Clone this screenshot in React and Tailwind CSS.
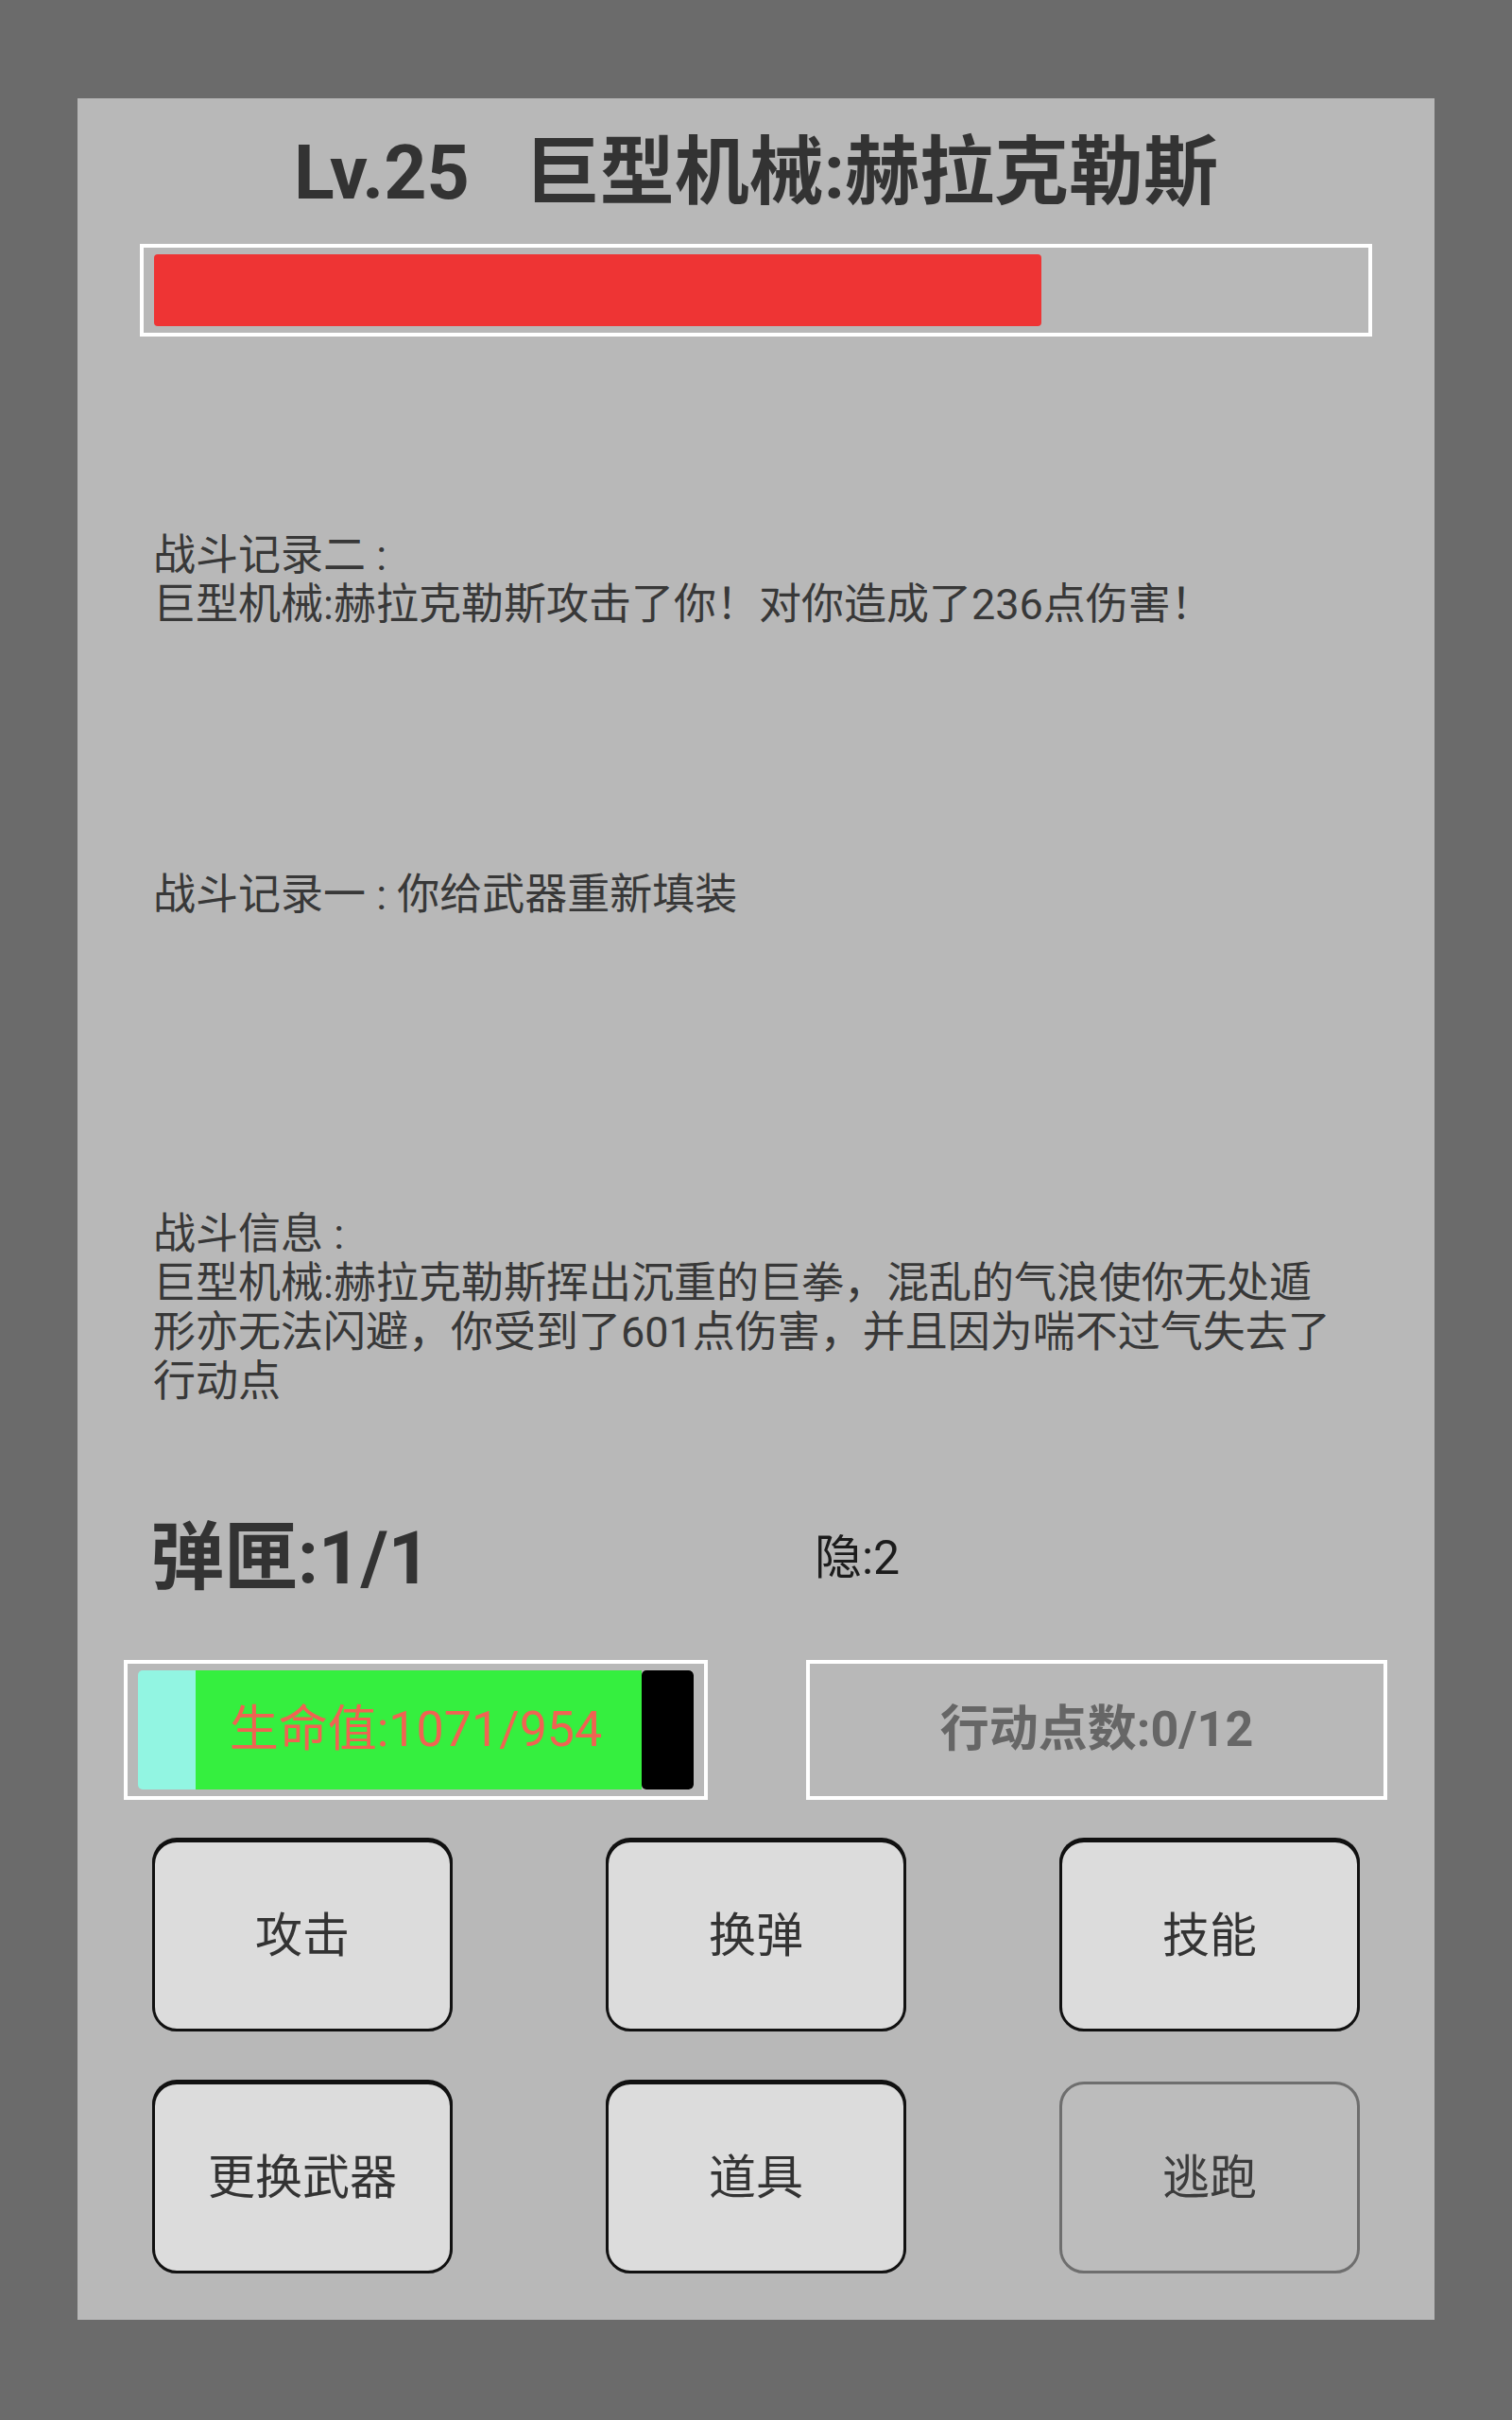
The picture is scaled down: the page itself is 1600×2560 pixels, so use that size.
const logs = [
  { mt: 'mt-[206px]', lines: ['战斗记录二 :', '巨型机械:赫拉克勒斯攻击了你！对你造成了236点伤害！'] },
  { mt: 'mt-[255px]', lines: ['战斗记录一 : 你给武器重新填装'] },
  {
    mt: 'mt-[307px]',
    lines: [
      '战斗信息 :',
      '巨型机械:赫拉克勒斯挥出沉重的巨拳，混乱的气浪使你无处遁',
      '形亦无法闪避，你受到了601点伤害，并且因为喘不过气失去了',
      '行动点',
    ],
  },
];

const actions = [
  ['攻击', '换弹', '技能'],
  ['更换武器', '道具', '逃跑'],
];

function ActionButton({ label, disabled }) {
  return (
    <button
      className={`w-[318px] h-[203px] rounded-[26px] border-[3px] flex items-center justify-center text-[50px] leading-none ${
        disabled
          ? 'bg-[#bcbcbc] border-[#6e6e6e] text-[#3c3c3c]'
          : 'bg-[#dcdcdc] border-[#111] text-[#333] shadow-[0_-2px_0_#111]'
      }`}
    >
      {label}
    </button>
  );
}

export default function App() {
  return (
    <div className="min-h-[2560px] bg-[#6b6b6b] pt-[104px] font-['Roboto','Noto_Sans_CJK_SC',sans-serif]">
      <div className="ml-[82px] w-[1436px] h-[2350px] bg-[#b8b8b8] pt-[29px] flex flex-col">
        {/* title */}
        <div className="h-[100px] flex items-center justify-center text-[79px] font-bold text-[#333] whitespace-pre">
          {'Lv.25   巨型机械:赫拉克勒斯'}
        </div>

        {/* boss hp */}
        <div className="mt-[25px] ml-[66px] w-[1304px] h-[98px] border-4 border-white py-[7px] pl-[11px]">
          <div className="w-[939px] h-full bg-[#ee3434] rounded-[4px]" />
        </div>

        {/* battle log */}
        {logs.map((log, i) => (
          <div key={i} className={`${log.mt} pl-[80px] text-[45px] leading-[52px] text-[#383838]`}>
            {log.lines.map((l, j) => (
              <div key={j} className="whitespace-pre">{l}</div>
            ))}
          </div>
        ))}

        {/* ammo / stealth */}
        <div className="mt-[110px] h-[100px] flex items-center">
          <div className="ml-[77px] w-[703px] text-[78px] font-bold text-[#333]">弹匣:1/1</div>
          <div className="text-[50px] text-[#1c1c1c]">隐:2</div>
        </div>

        {/* hp + action points */}
        <div className="mt-[58px] h-[148px] flex">
          <div className="ml-[49px] w-[618px] h-full border-4 border-white py-[7px] px-[11px]">
            <div className="relative h-full flex rounded-[5px] overflow-hidden">
              <div className="w-[61px] bg-[#92f5e2]" />
              <div className="flex-1 bg-[#35ef3f]" />
              <div className="w-[55px] bg-black rounded-[5px]" />
              <div className="absolute inset-0 flex items-center justify-center text-[52px] text-[#f06352]">
                生命值:1071/954
              </div>
            </div>
          </div>
          <div className="ml-[104px] w-[615px] h-full border-4 border-white flex items-center justify-center text-[52px] font-bold text-[#666]">
            行动点数:0/12
          </div>
        </div>

        {/* command buttons */}
        <div className="mt-[42px] flex flex-col gap-[53px] pl-[79px]">
          {actions.map((row, i) => (
            <div key={i} className="flex gap-[162px]">
              {row.map((label) => (
                <ActionButton key={label} label={label} disabled={label === '逃跑'} />
              ))}
            </div>
          ))}
        </div>
      </div>
    </div>
  );
}
